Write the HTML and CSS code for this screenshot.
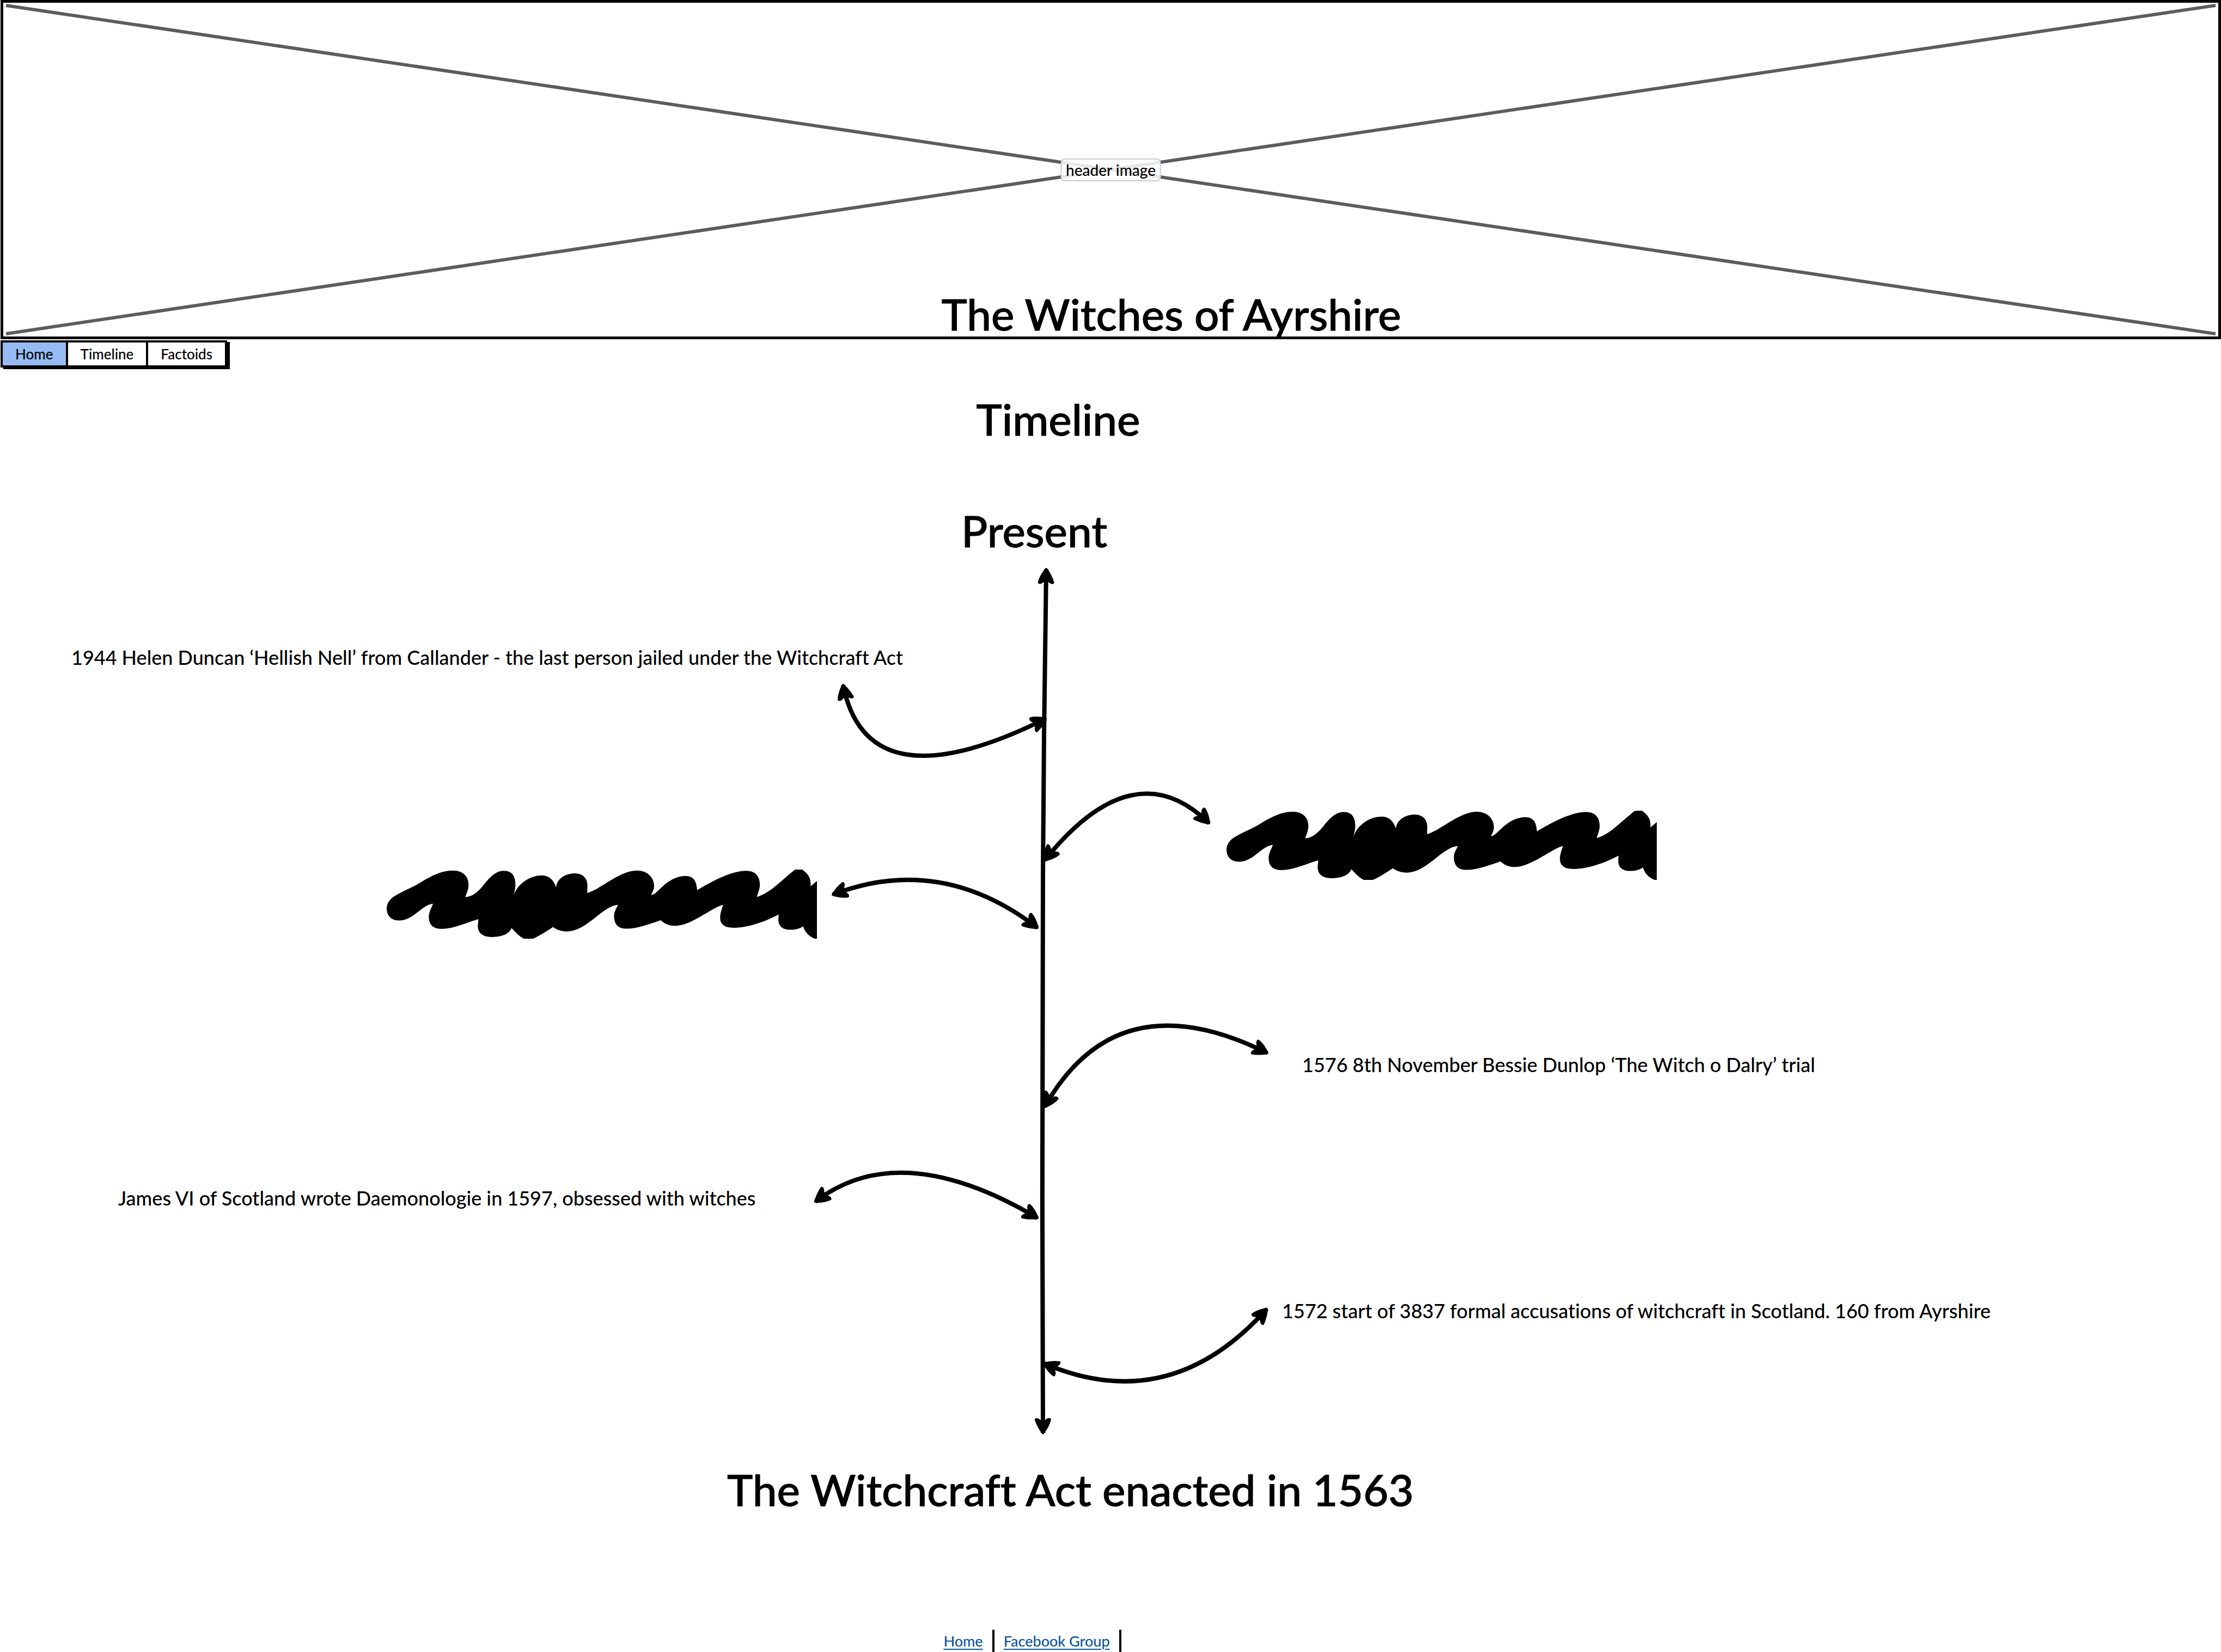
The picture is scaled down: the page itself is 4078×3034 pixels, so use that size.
FILE: index.html
```html
<!DOCTYPE html>
<html lang="en">
<head>
<meta charset="utf-8">
<title>The Witches of Ayrshire</title>
<link rel="stylesheet" href="styles.css">
</head>
<body>
<header class="banner">
  <svg class="banner-cross" viewBox="0 0 100 100" preserveAspectRatio="none" aria-hidden="true">
    <path d="M0 0L100 100M0 100L100 0"/>
  </svg>
  <span class="banner-tag">header image</span>
  <h1 class="site-title">The Witches of Ayrshire</h1>
</header>

<nav class="tabs" aria-label="Main">
  <a class="tab tab-current" href="#home" aria-current="page">Home</a>
  <a class="tab" href="#timeline">Timeline</a>
  <a class="tab" href="#factoids">Factoids</a>
</nav>

<main>
  <h2 class="page-title" id="timeline">Timeline</h2>

  <section class="map" aria-label="Timeline of events">
    <svg class="map-lines" viewBox="0 900 4078 1900" preserveAspectRatio="xMidYMid slice" aria-hidden="true">
      <defs>
        <marker id="head" viewBox="-32 -20 36 40" markerWidth="36" markerHeight="40" refX="0" refY="0" markerUnits="userSpaceOnUse" orient="auto-start-reverse">
          <path d="M0 0Q-14 -11 -25 -13Q-27 -10 -22 -5L-22 5Q-27 11 -25 13Q-12 9 0 0Z"/>
        </marker>
        <symbol id="scribble" viewBox="55 106 1440 380" preserveAspectRatio="none">
          <path d="M97 386C65 386 55 350 55 320C55 290 68 262 90 244C110 225 135 207 155 190C190 155 232 111 275 111C315 111 329 150 329 190C329 215 323 235 318 257C345 257 368 215 383 183C400 150 420 113 447 113C478 113 486 150 486 190C486 210 482 230 480 250C488 195 530 138 574 138C602 138 615 170 622 204C624 155 655 127 684 127C715 127 727 160 727 195L726 235C770 215 835 111 893 111C930 111 950 155 950 195C950 215 945 230 940 245C952 245 962 222 975 204C995 170 1025 141 1054 141C1085 141 1092 175 1094 219C1135 180 1205 113 1258 113C1295 113 1304 155 1304 190C1304 215 1297 235 1294 256C1340 235 1375 165 1422 106L1446 106C1465 130 1474 150 1474 185L1474 198L1495 168V486H1488C1465 470 1453 445 1449 417C1437 431 1423 437 1407 437C1375 437 1366 410 1366 380L1367 353C1325 390 1265 426 1218 426C1180 426 1171 400 1171 370C1171 345 1177 322 1181 300C1145 313 1075 415 1020 415C998 415 982 400 972 384C940 402 895 431 860 431C826 431 816 400 816 360C816 338 824 320 829 300C775 308 725 446 659 446C640 446 625 438 612 422C590 445 568 470 545 486H514C495 470 487 450 473 428C465 460 440 477 408 477C373 477 360 450 360 415L362 379C325 395 280 432 238 432C205 432 196 400 196 365C196 340 205 318 210 294C172 300 145 386 97 386Z"/>
        </symbol>
      </defs>
      <g class="arrows">
        <path d="M1921 1043C1918 1250 1916 1400 1915 1600C1914 1900 1913 2300 1915 2630"/>
        <path d="M1548 1256Q1593 1480 1920 1318"/>
        <path d="M1918 1578Q2082 1374 2220 1510"/>
        <path d="M1529 1641Q1727 1565 1905 1702"/>
        <path d="M1918 2031Q2051 1795 2327 1932"/>
        <path d="M1497 2205Q1652 2085 1905 2235"/>
        <path d="M1917 2502Q2148 2601 2326 2402"/>
      </g>
      <use href="#scribble" x="2252" y="1487" width="790" height="127"/>
      <use href="#scribble" x="710" y="1595" width="790" height="127"/>
    </svg>
    <h3 class="era era-present">Present</h3>
    <p class="event event-duncan">1944 Helen Duncan ‘Hellish Nell’ from Callander - the last person jailed under the Witchcraft Act</p>
    <p class="event event-dunlop">1576 8th November Bessie Dunlop ‘The Witch o Dalry’ trial</p>
    <p class="event event-james">James VI of Scotland wrote Daemonologie in 1597, obsessed with witches</p>
    <p class="event event-accusations">1572 start of 3837 formal accusations of witchcraft in Scotland. 160 from Ayrshire</p>
    <h3 class="era era-act">The Witchcraft Act enacted in 1563</h3>
  </section>
</main>

<footer class="links">
  <a class="link" href="#home">Home</a>
  <a class="link" href="#facebook">Facebook Group</a>
</footer>
</body>
</html>
```
FILE: styles.css
```css
* {
  box-sizing: border-box;
}

body {
  margin: 0;
  background: #fff;
  color: #000;
  font-family: Lato, "Open Sans", sans-serif;
  font-weight: 500;
  font-variant-ligatures: none;
}

h1,
h2,
h3,
p {
  margin: 0;
}

.site-title,
.page-title,
.era {
  font-size: 80px;
  line-height: 96px;
  font-weight: 500;
  white-space: nowrap;
  -webkit-text-stroke: 1px #000;
}

.banner {
  position: relative;
  display: flex;
  align-items: flex-end;
  justify-content: center;
  height: 623px;
  margin-left: 1px;
  border: 5px solid #000;
}

.banner-cross {
  position: absolute;
  inset: 5px;
  width: calc(100% - 10px);
  height: calc(100% - 10px);
  overflow: visible;
  fill: none;
  stroke: #5c5c5e;
}

.banner-cross path {
  stroke-width: 6px;
  vector-effect: non-scaling-stroke;
}

.banner-tag {
  position: absolute;
  top: 50%;
  left: 50%;
  transform: translate(-50%, -50%);
  padding: 4px 8px;
  border: 2px solid #ccc;
  border-radius: 8px;
  background: rgba(255, 255, 255, 0.85);
  font-size: 28px;
  line-height: 30px;
  white-space: nowrap;
}

.site-title {
  position: relative;
  padding-left: 222px;
  line-height: 84px;
}

.tabs {
  display: flex;
  width: max-content;
  margin: 2px 0 0 1px;
  border: 4px solid #000;
  box-shadow: 5px 3px 0 #000;
}

.tab {
  padding: 0 23px;
  border-left: 4px solid #000;
  color: #000;
  font-size: 26px;
  line-height: 42px;
  text-decoration: none;
}

.tab:first-child {
  border-left: 0;
}

.tab-current {
  background: #95bbf2;
}

.page-title {
  padding: 46px 192px 0 0;
  text-align: center;
}

.map {
  position: relative;
  margin-top: 85px;
  overflow: hidden;
}

.map-lines {
  display: block;
  width: 100%;
  height: 1900px;
}

.arrows {
  fill: none;
  stroke: #000;
  stroke-width: 8px;
}

.arrows path {
  marker-start: url(#head);
  marker-end: url(#head);
}

marker path {
  fill: #000;
  stroke: #000;
  stroke-width: 4px;
  stroke-linejoin: round;
}

.era,
.event {
  position: absolute;
}

.event {
  font-size: 36px;
  line-height: 44px;
  white-space: nowrap;
}

.era-present {
  top: 24px;
  left: calc(50% - 274px);
}

.event-duncan {
  top: 283px;
  left: calc(50% - 1908px);
}

.event-dunlop {
  top: 1031px;
  left: calc(50% + 352px);
}

.event-james {
  top: 1276px;
  left: calc(50% - 1822px);
}

.event-accusations {
  top: 1483px;
  left: calc(50% + 315px);
}

.era-act {
  top: 1785px;
  left: calc(50% - 704px);
}

.links {
  display: flex;
  justify-content: center;
  margin-top: 191px;
  padding-right: 304px;
}

.link {
  padding: 0 17px;
  border-right: 4px solid #000;
  color: #0d569e;
  font-size: 27px;
  line-height: 42px;
  text-decoration-thickness: 2px;
  text-underline-offset: 4px;
}
```
